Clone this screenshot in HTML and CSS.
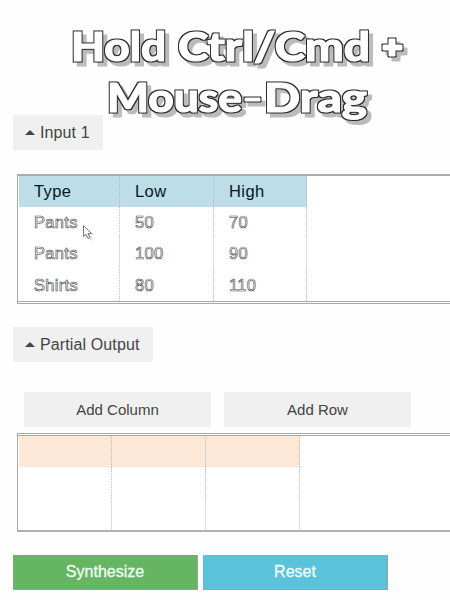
FILE: index.html
```html
<!DOCTYPE html>
<html lang="en">
<head>
<meta charset="utf-8">
<title>Synthesizer</title>
<link rel="stylesheet" href="styles.css">
</head>
<body>
<svg class="caption" width="450" height="135" viewBox="0 0 450 135">
  <filter id="outline" x="-5%" y="-10%" width="110%" height="125%" color-interpolation-filters="sRGB">
    <feMorphology in="SourceAlpha" operator="dilate" radius="1" result="grown"/>
    <feFlood flood-color="#2a2a2a"/>
    <feComposite in2="grown" operator="in" result="edge"/>
    <feOffset in="grown" dx="4" dy="4" result="moved"/>
    <feFlood flood-color="#bbb"/>
    <feComposite in2="moved" operator="in" result="shade"/>
    <feMerge>
      <feMergeNode in="shade"/>
      <feMergeNode in="edge"/>
      <feMergeNode in="SourceGraphic"/>
    </feMerge>
  </filter>
  <g class="caption-face" filter="url(#outline)">
    <text x="71" y="61" textLength="95" lengthAdjust="spacingAndGlyphs">Hold</text>
    <text x="178" y="61" textLength="192" lengthAdjust="spacingAndGlyphs">Ctrl/Cmd</text>
    <path d="M389 39h6v6h7v5h-7v6h-6v-6h-6v-5h6z"/>
    <text x="107" y="112" textLength="135" lengthAdjust="spacingAndGlyphs">Mouse</text>
    <path d="M245 98h15v3h-15z"/>
    <text x="264" y="112" textLength="103" lengthAdjust="spacingAndGlyphs">Drag</text>
  </g>
</svg>
<main>
  <button class="toggle"><i class="caret"></i>Input 1</button>
  <div class="sheet input-sheet">
    <div class="row head blue"><span>Type</span><span>Low</span><span>High</span></div>
    <div class="row"><span>Pants</span><span>50</span><span>70</span></div>
    <div class="row solid"><span>Pants</span><span>100</span><span>90</span></div>
    <div class="row"><span>Shirts</span><span>80</span><span>110</span></div>
  </div>
  <button class="toggle output">
    <i class="caret"></i>Partial Output
  </button>
  <div class="tools"><button>Add Column</button><button>Add Row</button></div>
  <div class="sheet output-sheet">
    <div class="row head peach"><span></span><span></span><span></span></div>
    <div class="row"><span></span><span></span><span></span></div>
    <div class="row solid"><span></span><span></span><span></span></div>
  </div>
  <div class="actions"><button class="synth">Synthesize</button><button class="reset">Reset</button></div>
</main>
<svg class="pointer" width="14" height="18" viewBox="0 0 14 18">
  <path class="pointer-shadow" d="M3 3v12l3-3 2 5 3-1-2-5h4z"/>
  <path class="pointer-face" d="M1.500 1.500v11l2.500-2.300 2 4.300 2-.9-2-4.100h3.400z"/>
</svg>
</body>
</html>
```
FILE: styles.css
```css
* { box-sizing: border-box; }
body {
  position: relative;
  margin: 0;
  width: 450px;
  height: 600px;
  overflow: hidden;
  background: #fefefe;
  font: 16px/20px "Liberation Sans", Arial, sans-serif;
  color: #444;
}
.caption {
  position: absolute;
  top: 0;
  left: 0;
  z-index: 2;
  font: 900 39px Lato, sans-serif;
}
.caption-face {
  fill: #fff;
  stroke: #fff;
  stroke-width: 1;
}
main {
  display: flex;
  flex-direction: column;
  align-items: flex-start;
  padding: 115px 0 0 13px;
}
button {
  height: 35px;
  padding: 0;
  border: 0;
  background: #f0f0f0;
  color: #444;
  font: inherit;
}
.toggle {
  display: flex;
  align-items: center;
  width: 90px;
  padding-left: 12px;
  border-radius: 1px;
  letter-spacing: .12px;
  white-space: nowrap;
}
.toggle.output { width: 140px; margin-top: 23px; }
.caret {
  margin-right: 5px;
  border: 5px solid transparent;
  border-top: 0;
  border-bottom-color: #444;
}
.sheet {
  width: 437px;
  margin-left: 4px;
  border-left: 1px solid #aaa;
  background: #fff;
}
.input-sheet {
  height: 130px;
  margin-top: 24px;
  border-top: 2px solid #acacac;
  border-bottom: 3px double #aaa;
}
.output-sheet {
  height: 99px;
  margin-top: 6px;
  border-top: 3px double #aaa;
  border-bottom: 2px solid #b0b0b0;
}
.row {
  display: grid;
  grid-template-columns: 101px 94px 93px;
  width: 288px;
  height: 31.3px;
  margin-left: 1px;
}
.output-sheet .row { grid-template-columns: 93px 94px 94px; width: 281px; }
.row span {
  padding: 5px 0 0 15px;
  border-right: 1px dotted #bbb;
  color: #fff;
  font-size: 16.5px;
  letter-spacing: .3px;
  -webkit-text-stroke: .6px #444;
}
.row.solid span { border-right: 1px solid #ddd; }
.row.head { height: 31px; }
.row.head span {
  padding-top: 5px;
  color: #051525;
  letter-spacing: .4px;
  -webkit-text-stroke: 0;
}
.blue { background: #bddde9; }
.peach { background: #fde7d7; }
.tools { display: flex; gap: 13px; margin: 30px 0 0 11px; }
.tools button { width: 187px; font-size: 15px; }
.actions { display: flex; gap: 5px; margin-top: 23px; }
.actions button {
  width: 185px;
  border-right: 1px solid #9aa39a;
  border-bottom: 1px solid #9aa39a;
  color: #effff4;
  -webkit-text-stroke: .3px #effff4;
}
.actions .synth { background: #66b563; }
.actions .reset { background: #5bc2dc; }
.pointer { position: absolute; left: 82px; top: 224px; }
.pointer-shadow { fill: #e4e4e4; }
.pointer-face { fill: #fff; stroke: #777; stroke-width: 1; }
```
